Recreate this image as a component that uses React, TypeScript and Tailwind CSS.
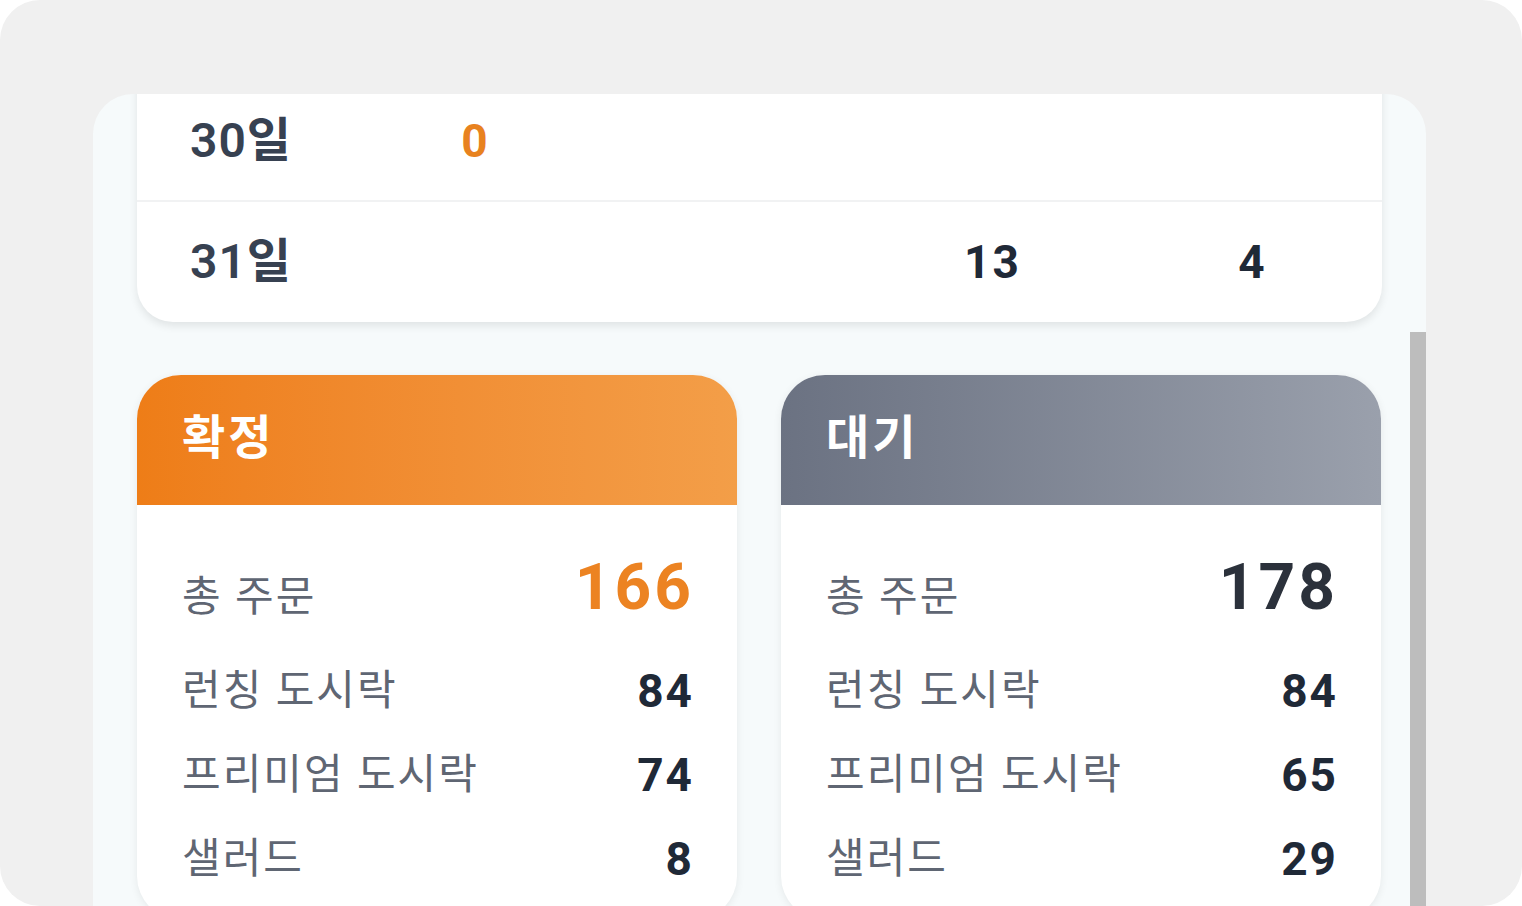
import React from "react";

const font = { fontFamily: 'Roboto, "Noto Sans CJK KR", sans-serif' };

type Item = { label: string; value: number };

function StatusCard({
  title,
  headerClass,
  total,
  totalClass,
  items,
}: {
  title: string;
  headerClass: string;
  total: number;
  totalClass: string;
  items: Item[];
}) {
  return (
    <div className="flex h-[545px] w-[600px] flex-col rounded-[44px] bg-white shadow-[0_2px_8px_rgba(0,0,0,0.07)]">
      <div className={`flex h-[130px] items-center rounded-t-[44px] pb-[6px] pl-[45px] ${headerClass}`}>
        <span className="text-[47px] font-bold leading-none tracking-[3px] text-white">{title}</span>
      </div>
      <div className="flex flex-col pl-[45px] pr-[46px] pt-[52px]">
        <div className="flex h-[92px] items-center justify-between">
          <span className="mb-[12px] text-[42px] leading-none tracking-[2px] text-[#5f6673]">총 주문</span>
          <span className={`-mr-[3px] mb-[30px] text-[64px] font-bold leading-none tracking-[3px] ${totalClass}`}>
            {total}
          </span>
        </div>
        {items.map((it) => (
          <div key={it.label} className="flex h-[84px] items-center justify-between">
            <span className="text-[42px] leading-none tracking-[2px] text-[#5f6673]">{it.label}</span>
            <span className="-mr-[3px] text-[46px] font-bold leading-none tracking-[2px] text-[#1f2937]">
              {it.value}
            </span>
          </div>
        ))}
      </div>
    </div>
  );
}

export default function App() {
  return (
    <div className="h-[906px] w-[1522px] bg-white" style={font}>
      <div className="flex h-full w-full overflow-hidden rounded-[40px] bg-[#f0f0f0] pl-[93px] pt-[94px]">
        <div className="flex h-[812px] w-[1333px] overflow-hidden rounded-t-[40px] bg-[#f6fafb]">
          {/* scrolled content */}
          <div className="flex w-[1317px] flex-col pl-[44px] pr-[28px]">
            <div className="-mt-[12px] flex w-[1245px] flex-col rounded-b-[36px] bg-white shadow-[0_4px_8px_rgba(0,0,0,0.09)]">
              <div className="grid h-[120px] grid-cols-[208px_repeat(4,259px)] items-center border-b-2 border-[#f1f2f3]">
                <span className="pl-[53px] text-[48px] font-semibold leading-none tracking-[1px] text-[#374151]">30일</span>
                <span className="text-center text-[46px] font-bold leading-none text-[#e8821f]">0</span>
                <span />
                <span />
                <span />
              </div>
              <div className="grid h-[120px] grid-cols-[208px_repeat(4,259px)] items-center">
                <span className="pl-[53px] text-[48px] font-semibold leading-none tracking-[1px] text-[#374151]">31일</span>
                <span />
                <span />
                <span className="text-center text-[46px] font-bold leading-none tracking-[2px] text-[#1f2937]">13</span>
                <span className="text-center text-[46px] font-bold leading-none text-[#1f2937]">4</span>
              </div>
            </div>

            <div className="mt-[53px] flex gap-[44px]">
              <StatusCard
                title="확정"
                headerClass="bg-gradient-to-r from-[#ee7d17] to-[#f39e48]"
                total={166}
                totalClass="text-[#ec8322]"
                items={[
                  { label: "런칭 도시락", value: 84 },
                  { label: "프리미엄 도시락", value: 74 },
                  { label: "샐러드", value: 8 },
                ]}
              />
              <StatusCard
                title="대기"
                headerClass="bg-gradient-to-r from-[#6b7282] to-[#9aa0ac]"
                total={178}
                totalClass="text-[#2b313b]"
                items={[
                  { label: "런칭 도시락", value: 84 },
                  { label: "프리미엄 도시락", value: 65 },
                  { label: "샐러드", value: 29 },
                ]}
              />
            </div>
          </div>
          {/* scrollbar */}
          <div className="mt-[238px] h-[574px] w-[16px] bg-[#bdbdbd]" />
        </div>
      </div>
    </div>
  );
}
